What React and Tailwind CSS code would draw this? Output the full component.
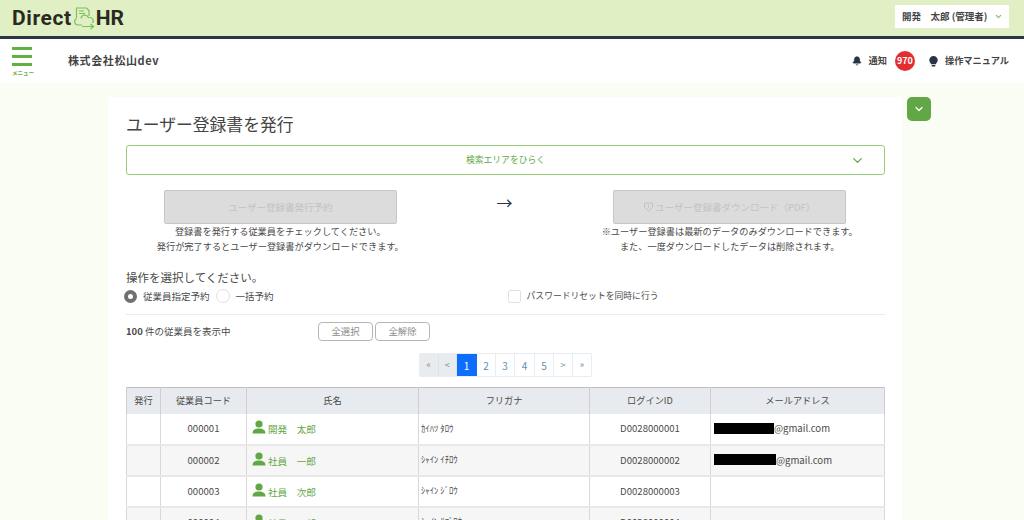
import React from "react";
import { ChevronDown, Bell } from "lucide-react";

const rows = [
  ["000001", "開発　太郎", "ｶｲﾊﾂ ﾀﾛｳ", "D0028000001", 60],
  ["000002", "社員　一郎", "ｼｬｲﾝ ｲﾁﾛｳ", "D0028000002", 62],
  ["000003", "社員　次郎", "ｼｬｲﾝ ｼﾞﾛｳ", "D0028000003", 0],
  ["000004", "社員　三郎", "ｼｬｲﾝ ｻﾌﾞﾛｳ", "D0028000004", 0],
];

function Person() {
  return (
    <svg width="14" height="14" viewBox="0 0 14 14" className="shrink-0 mb-[3px]">
      <circle cx="7" cy="4" r="3.6" fill="#62a745" />
      <path d="M0.5 13.5c0-3.6 2.6-5 6.5-5s6.5 1.4 6.5 5z" fill="#62a745" />
    </svg>
  );
}

function Logo() {
  return (
    <svg width="22" height="23" viewBox="0 0 22 23" fill="none" stroke="#7cc05c" strokeWidth="1.2" className="ml-[2px] mb-[1px]">
      <path d="M2.5 11V1h10l2.5 2.5V9" />
      <path d="M5 4h5M5 6.5h6" strokeWidth="1" />
      <path d="M8 18H4a3.4 3.4 0 0 1-1.5-6.4M7 11.5a3.8 3.8 0 0 1 7.3-1H16a3.4 3.4 0 0 1 2.5 5.5" />
      <path d="M8 19.5h11M16.5 17l3 2.5-3 2.5" />
    </svg>
  );
}

function Bulb() {
  return (
    <svg width="9" height="11" viewBox="0 0 9 11" className="ml-[14px]">
      <path d="M4.5 0a4.2 4.2 0 0 0-4.2 4.2c0 1.7 1.3 2.6 1.8 4h4.8c.5-1.4 1.8-2.3 1.8-4A4.2 4.2 0 0 0 4.5 0z" fill="#2b3347" />
      <rect x="2.6" y="9" width="3.8" height="1.6" rx="0.6" fill="#2b3347" />
    </svg>
  );
}

const pageBtn = "h-[22px] flex items-center justify-center text-[9px] border-r";

export default function App() {
  return (
    <div className="h-[520px] overflow-hidden bg-[#f9fdf3] text-[#4a4a4a] font-['Noto_Sans_CJK_JP','Noto_Sans',sans-serif]">
      <header className="h-[39px] bg-[#e0f0c4] border-b-[3px] border-[#2b3347] flex items-center justify-between pl-[12px] pr-[15px]">
        <div className="flex items-center mt-[1px]">
          <span className="text-[21px] leading-none font-bold tracking-[0.6px] text-[#2a2a22] font-['Roboto',sans-serif]">Direct</span>
          <Logo />
          <span className="text-[21px] leading-none font-bold text-[#2a2a22] font-['Roboto',sans-serif]">HR</span>
        </div>
        <div className="h-[23px] w-[114px] bg-white flex items-center pl-[7px] gap-[7px] mb-[3px] text-[9.5px] font-bold text-[#444]">
          <span className="whitespace-pre">開発　太郎 (管理者)</span>
          <ChevronDown size={9} strokeWidth={3} color="#7cc05c" />
        </div>
      </header>

      <div className="h-[44px] bg-white flex items-center justify-between pr-[15px]">
        <div className="flex items-center">
          <div className="w-[68px] pl-[12px] flex flex-col">
            <div className="w-[20px] h-[3px] bg-[#62b044] mt-[1px]" />
            <div className="w-[20px] h-[3px] bg-[#62b044] mt-[5px]" />
            <div className="w-[20px] h-[3px] bg-[#62b044] mt-[5px]" />
            <span className="text-[5.5px] leading-none mt-[5px] font-bold text-[#62b044] whitespace-nowrap">メニュー</span>
          </div>
          <span className="text-[11px] font-bold tracking-[0.6px] text-[#444] mb-[1px]">株式会社松山dev</span>
        </div>
        <div className="flex items-center text-[9.2px] font-bold text-[#444]">
          <Bell size={10} fill="#2b3347" color="#2b3347" />
          <span className="ml-[7px]">通知</span>
          <span className="ml-[8px] w-[20px] h-[20px] rounded-full bg-[#e32e30] text-white text-[9px] flex items-center justify-center">970</span>
          <Bulb />
          <span className="ml-[7px]">操作マニュアル</span>
        </div>
      </div>

      <div className="flex items-start pl-[108px] pt-[14px]">
        <main className="w-[794px] h-[500px] bg-white pl-[18px] pr-[17px] pt-[14px] shrink-0">
          <h1 className="text-[16.8px] leading-[27px] text-[#444]">ユーザー登録書を発行</h1>
          <div className="h-[30px] mt-[7px] border border-[#95cf7c] rounded-[3px] flex items-center justify-center relative text-[8.8px] text-[#62a745]">
            検索エリアをひらく
            <ChevronDown size={15} strokeWidth={2} color="#62a745" className="absolute right-[19px] top-[7px]" />
          </div>

          <div className="flex mt-[15px] items-start">
            <div className="w-[309px] flex flex-col items-center">
              <div className="w-[233px] h-[34px] bg-[#dcdcdc] border border-[#c6c6c6] rounded-[2px] flex items-center justify-center text-[9.5px] text-[#c2c2c2]">ユーザー登録書発行予約</div>
              <p className="text-[9.2px] leading-[15px] text-center whitespace-nowrap">登録書を発行する従業員をチェックしてください。<br />発行が完了するとユーザー登録書がダウンロードできます。</p>
            </div>
            <div className="w-[140px] text-center text-[16px] leading-[24px] text-[#2b3347]">→</div>
            <div className="w-[311px] flex flex-col items-center">
              <div className="w-[233px] h-[34px] bg-[#dcdcdc] border border-[#c6c6c6] rounded-[2px] flex items-center justify-center gap-[2px] text-[9.5px] text-[#c2c2c2]">
                <svg width="9" height="10" viewBox="0 0 9 10" fill="none" stroke="#c2c2c2" strokeWidth="1">
                  <path d="M0.5 1h8v4.5L4.5 9 0.5 5.5z" />
                  <path d="M4.5 2.5v3" />
                </svg>
                ユーザー登録書ダウンロード（PDF）
              </div>
              <p className="text-[9.2px] leading-[15px] text-center whitespace-nowrap">※ユーザー登録書は最新のデータのみダウンロードできます。<br />また、一度ダウンロードしたデータは削除されます。</p>
            </div>
          </div>

          <p className="text-[11.5px] leading-[18px] mt-[14px]">操作を選択してください。</p>
          <div className="flex items-center h-[18px] text-[9.5px] mt-[1px]">
            <span className="w-[13px] h-[13px] rounded-full border-[4px] border-[#707070] bg-white -ml-[2px]" />
            <span className="ml-[6px]">従業員指定予約</span>
            <span className="w-[14px] h-[14px] rounded-full border border-[#e0e0e0] bg-white ml-[6px]" />
            <span className="ml-[6px]">一括予約</span>
            <span className="w-[13px] h-[13px] rounded-[2px] border border-[#e0e0e0] bg-white ml-[234px]" />
            <span className="ml-[6px] text-[8.8px]">パスワードリセットを同時に行う</span>
          </div>
          <div className="border-t border-[#e6f0dc] mt-[9px] flex items-center h-[33px] text-[9.5px]">
            <span className="w-[192px]"><b className="font-bold">100</b> 件の従業員を表示中</span>
            <button className="w-[55px] h-[19px] border border-[#b5b5b5] rounded-[4px] text-[#8c8c8c] text-[9.4px]">全選択</button>
            <button className="w-[55px] h-[19px] border border-[#b5b5b5] rounded-[4px] text-[#8c8c8c] text-[9.4px] ml-[2px]">全解除</button>
          </div>

          <div className="flex justify-center mt-[6px]">
            <div className="flex rounded-[2px] border-y border-l border-[#e9edf1] bg-white text-[#5c8fb5]">
              <span className={`${pageBtn} w-[18.5px] bg-[#e9ecef] text-[#888] border-[#dee2e6]`}>«</span>
              <span className={`${pageBtn} w-[18.5px] bg-[#e9ecef] text-[#888] border-[#dee2e6]`}>&lt;</span>
              <span className={`${pageBtn} w-[20px] bg-[#0d6efd] text-white text-[10px] border-[#0d6efd]`}>1</span>
              <span className={`${pageBtn} w-[19px] text-[10px] border-[#e9edf1]`}>2</span>
              <span className={`${pageBtn} w-[19px] text-[10px] border-[#e9edf1]`}>3</span>
              <span className={`${pageBtn} w-[20px] text-[10px] border-[#e9edf1]`}>4</span>
              <span className={`${pageBtn} w-[19px] text-[10px] border-[#e9edf1]`}>5</span>
              <span className={`${pageBtn} w-[19px] border-[#e9edf1]`}>&gt;</span>
              <span className={`${pageBtn} w-[19px] border-[#e9edf1]`}>»</span>
            </div>
          </div>

          <table className="mt-[10px] w-[759px] table-fixed border-collapse border border-[#bdbdbd] text-[9.6px] text-[#4a4a4a]">
            <colgroup>
              <col className="w-[34px]" /><col className="w-[86px]" /><col className="w-[172px]" /><col className="w-[171px]" /><col className="w-[121px]" /><col />
            </colgroup>
            <thead>
              <tr className="h-[26px] bg-[#e7eaee] text-[9.2px]">
                {["発行", "従業員コード", "氏名", "フリガナ", "ログインID", "メールアドレス"].map((h) => (
                  <th key={h} className="border-x border-[#cfcfcf] font-normal">{h}</th>
                ))}
              </tr>
            </thead>
            <tbody>
              {rows.map((r, i) => (
                <tr key={r[0]} className={`h-[31px] border-b-2 border-[#e8e8e8] ${i % 2 ? "bg-[#f6f6f6]" : "bg-white"}`}>
                  <td className="border-x border-[#d8d8d8]" />
                  <td className="border-x border-[#d8d8d8] text-center">{r[0]}</td>
                  <td className="border-x border-[#d8d8d8] pl-[5px]">
                    <div className="flex items-center gap-[2px]">
                      <Person />
                      <span className="text-[#62a745] mt-[2px]">{r[1]}</span>
                    </div>
                  </td>
                  <td className="border-x border-[#d8d8d8] pl-[2px] text-[8.7px]">{r[2]}</td>
                  <td className="border-x border-[#d8d8d8] text-center">{r[3]}</td>
                  <td className="border-x border-[#d8d8d8] pl-[3px]">
                    {r[4] > 0 && (
                      <div className="flex items-center">
                        <span className="h-[11px] bg-black" style={{ width: r[4] }} />
                        <span>@gmail.com</span>
                      </div>
                    )}
                  </td>
                </tr>
              ))}
            </tbody>
          </table>
        </main>
        <button className="ml-[5px] w-[24px] h-[24px] rounded-[5px] bg-[#62a745] flex items-center justify-center">
          <ChevronDown size={12} strokeWidth={2.5} color="white" />
        </button>
      </div>
    </div>
  );
}
